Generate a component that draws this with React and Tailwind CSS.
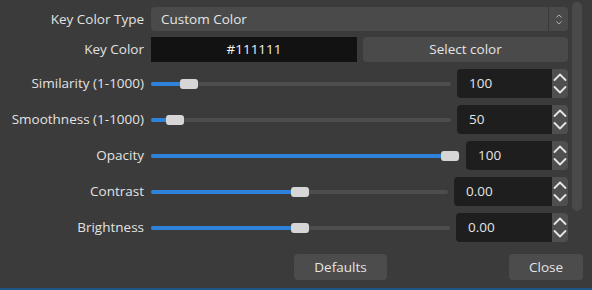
import React from "react";

const font = { fontFamily: '"Open Sans", "Noto Sans", sans-serif' };

function Chevron({ up, className }) {
  return (
    <svg viewBox="0 0 14 8" className={className} fill="none" stroke="currentColor" strokeWidth="1.8" strokeLinecap="round" strokeLinejoin="round">
      {up ? <path d="M1.5 7 L7 1.5 L12.5 7" /> : <path d="M1.5 1 L7 6.5 L12.5 1" />}
    </svg>
  );
}

function Slider({ width, pos }) {
  // pos = handle left offset in px
  return (
    <div className="relative h-[10px] shrink-0" style={{ width }}>
      <div className="absolute left-0 right-0 top-[3px] h-[4px] rounded-full bg-[#4d4d4d]" />
      <div className="absolute left-0 top-[3px] h-[4px] rounded-full bg-[#2f82d9]" style={{ width: pos + 4 }} />
      <div className="absolute top-0 h-[10px] w-[18px] rounded-[3px] bg-[#d6d6d6]" style={{ left: pos }} />
    </div>
  );
}

function SpinBox({ width, value }) {
  return (
    <div className="flex h-[29px] shrink-0" style={{ width }}>
      <div className="flex flex-1 items-center rounded-l-[4px] bg-[#1e1e1e] pl-[12px] text-[13.5px] text-[#e4e4e4]">{value}</div>
      <div className="flex w-[16px] flex-col rounded-r-[4px] bg-[#4f4f4f] text-[#e6e6e6]">
        <div className="flex flex-1 items-center justify-center pt-[1px]">
          <Chevron up className="w-[14px] h-[8px]" />
        </div>
        <div className="flex flex-1 items-center justify-center pb-[1px]">
          <Chevron className="w-[14px] h-[8px]" />
        </div>
      </div>
    </div>
  );
}

function Label({ children }) {
  return <div className="w-[144px] shrink-0 text-right text-[13.5px] text-[#e2e2e2]">{children}</div>;
}

function SliderRow({ label, sliderWidth, pos, spinWidth, value }) {
  return (
    <div className="flex h-[29px] items-center">
      <Label>{label}</Label>
      <div className="ml-[7px] flex items-center gap-[6px]">
        <Slider width={sliderWidth} pos={pos} />
        <SpinBox width={spinWidth} value={value} />
      </div>
    </div>
  );
}

export default function App() {
  return (
    <div className="relative h-[290px] w-[592px] overflow-hidden bg-[#3b3b3b]" style={font}>
      <div className="flex">
        {/* form */}
        <div className="flex w-[572px] flex-col gap-[7px] pt-[7px]">
          <div className="flex h-[24px] items-center">
            <Label>Key Color Type</Label>
            <div className="ml-[7px] flex h-[24px] w-[417px] items-center rounded-[4px] bg-[#4a4a4a]">
              <div className="flex-1 pl-[10px] text-[13.5px] text-[#e4e4e4]">Custom Color</div>
              <div className="flex h-full w-[20px] flex-col items-center justify-center gap-[3px] border-l border-[#3a3a3a] text-[#cfcfcf]">
                <Chevron up className="w-[6px] h-[4px]" />
                <Chevron className="w-[6px] h-[4px]" />
              </div>
            </div>
          </div>
          <div className="-mt-[1px] flex h-[25px] items-center">
            <Label>Key Color</Label>
            <div className="ml-[7px] flex gap-[6px]">
              <div className="flex h-[25px] w-[206px] items-center justify-center bg-[#121212] text-[13.5px] text-[#f0f0f0]">#111111</div>
              <div className="flex h-[25px] w-[205px] items-center justify-center rounded-[4px] bg-[#4a4a4a] text-[13.5px] text-[#e4e4e4]">Select color</div>
            </div>
          </div>
          <SliderRow label="Similarity (1-1000)" sliderWidth={300} pos={29} spinWidth={111} value="100" />
          <SliderRow label="Smoothness (1-1000)" sliderWidth={300} pos={15} spinWidth={111} value="50" />
          <SliderRow label="Opacity" sliderWidth={309} pos={290} spinWidth={102} value="100" />
          <SliderRow label="Contrast" sliderWidth={297} pos={140} spinWidth={114} value="0.00" />
          <SliderRow label="Brightness" sliderWidth={299} pos={140} spinWidth={112} value="0.00" />
        </div>
        {/* scrollbar */}
        <div className="pt-[2px]">
          <div className="h-[209px] w-[10px] rounded-full bg-[#4a4a4a]" />
        </div>
      </div>
      {/* buttons */}
      <div className="mt-[12px] flex h-[26px]">
        <div className="ml-[294px] flex w-[93px] items-center justify-center rounded-[4px] bg-[#4c4c4c] text-[13.5px] text-[#e4e4e4]">Defaults</div>
        <div className="ml-[122px] flex w-[74px] items-center justify-center rounded-[4px] bg-[#4c4c4c] text-[13.5px] text-[#e4e4e4]">Close</div>
      </div>
      <div className="absolute bottom-0 left-0 right-0 h-[2px] bg-[#1d5687]" />
    </div>
  );
}
